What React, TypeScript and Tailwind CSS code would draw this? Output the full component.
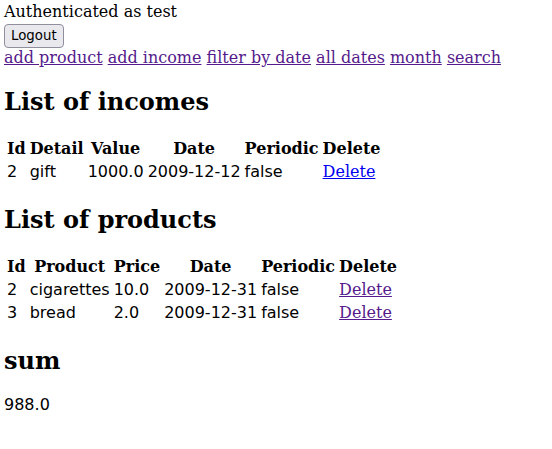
import React from "react";

const serif = "font-['DejaVu_Serif',serif]";
const sans = "font-['DejaVu_Sans',sans-serif]";

function Th({ children }: { children: React.ReactNode }) {
  return <th className={`p-[1px] text-center font-bold ${serif}`}>{children}</th>;
}
function Td({ children }: { children: React.ReactNode }) {
  return <td className={`p-[1px] text-left ${sans}`}>{children}</td>;
}
function DelLink({ visited }: { visited?: boolean }) {
  return (
    <td className={`p-[1px] text-left ${serif}`}>
      <a href="#" className={`underline ${visited ? "text-[#551a8b]" : "text-[#0000ee]"}`}>Delete</a>
    </td>
  );
}

export default function App() {
  const navLinks = ["add product", "add income", "filter by date", "all dates", "month", "search"];
  return (
    <div className={`bg-white text-black text-[16px] leading-[19px] px-[4px] pt-[2px] min-h-[449px] ${serif}`}>
      <div>Authenticated as test</div>
      <div className="pt-[3px] h-[27px]">
        <button className={`block h-[24px] px-[6px] rounded-[4px] border border-[#8f8f9d] bg-[#e9e9ed] text-[13.33px] leading-[16px] text-black ${sans}`}>
          Logout
        </button>
      </div>
      <div>
        {navLinks.map((l, i) => (
          <React.Fragment key={l}>
            {i > 0 && " "}
            <a href="#" className="underline text-[#551a8b]">{l}</a>
          </React.Fragment>
        ))}
      </div>
      <h2 className="text-[24px] leading-[29px] font-bold mt-[20px] mb-[20px]">List of incomes</h2>
      <table className="border-separate border-spacing-[2px]">
        <thead>
          <tr>
            <Th>Id</Th><Th>Detail</Th><Th>Value</Th><Th>Date</Th><Th>Periodic</Th><Th>Delete</Th>
          </tr>
        </thead>
        <tbody>
          <tr>
            <Td>2</Td><Td>gift</Td><Td>1000.0</Td><Td>2009-12-12</Td><Td>false</Td><DelLink />
          </tr>
        </tbody>
      </table>
      <h2 className="text-[24px] leading-[29px] font-bold mt-[21px] mb-[20px]">List of products</h2>
      <table className="border-separate border-spacing-[2px]">
        <thead>
          <tr>
            <Th>Id</Th><Th>Product</Th><Th>Price</Th><Th>Date</Th><Th>Periodic</Th><Th>Delete</Th>
          </tr>
        </thead>
        <tbody>
          <tr>
            <Td>2</Td><Td>cigarettes</Td><Td>10.0</Td><Td>2009-12-31</Td><Td>false</Td><DelLink visited />
          </tr>
          <tr>
            <Td>3</Td><Td>bread</Td><Td>2.0</Td><Td>2009-12-31</Td><Td>false</Td><DelLink visited />
          </tr>
        </tbody>
      </table>
      <h2 className="text-[24px] leading-[29px] font-bold mt-[21px] mb-[20px]">sum</h2>
      <div className={sans}>988.0</div>
    </div>
  );
}
